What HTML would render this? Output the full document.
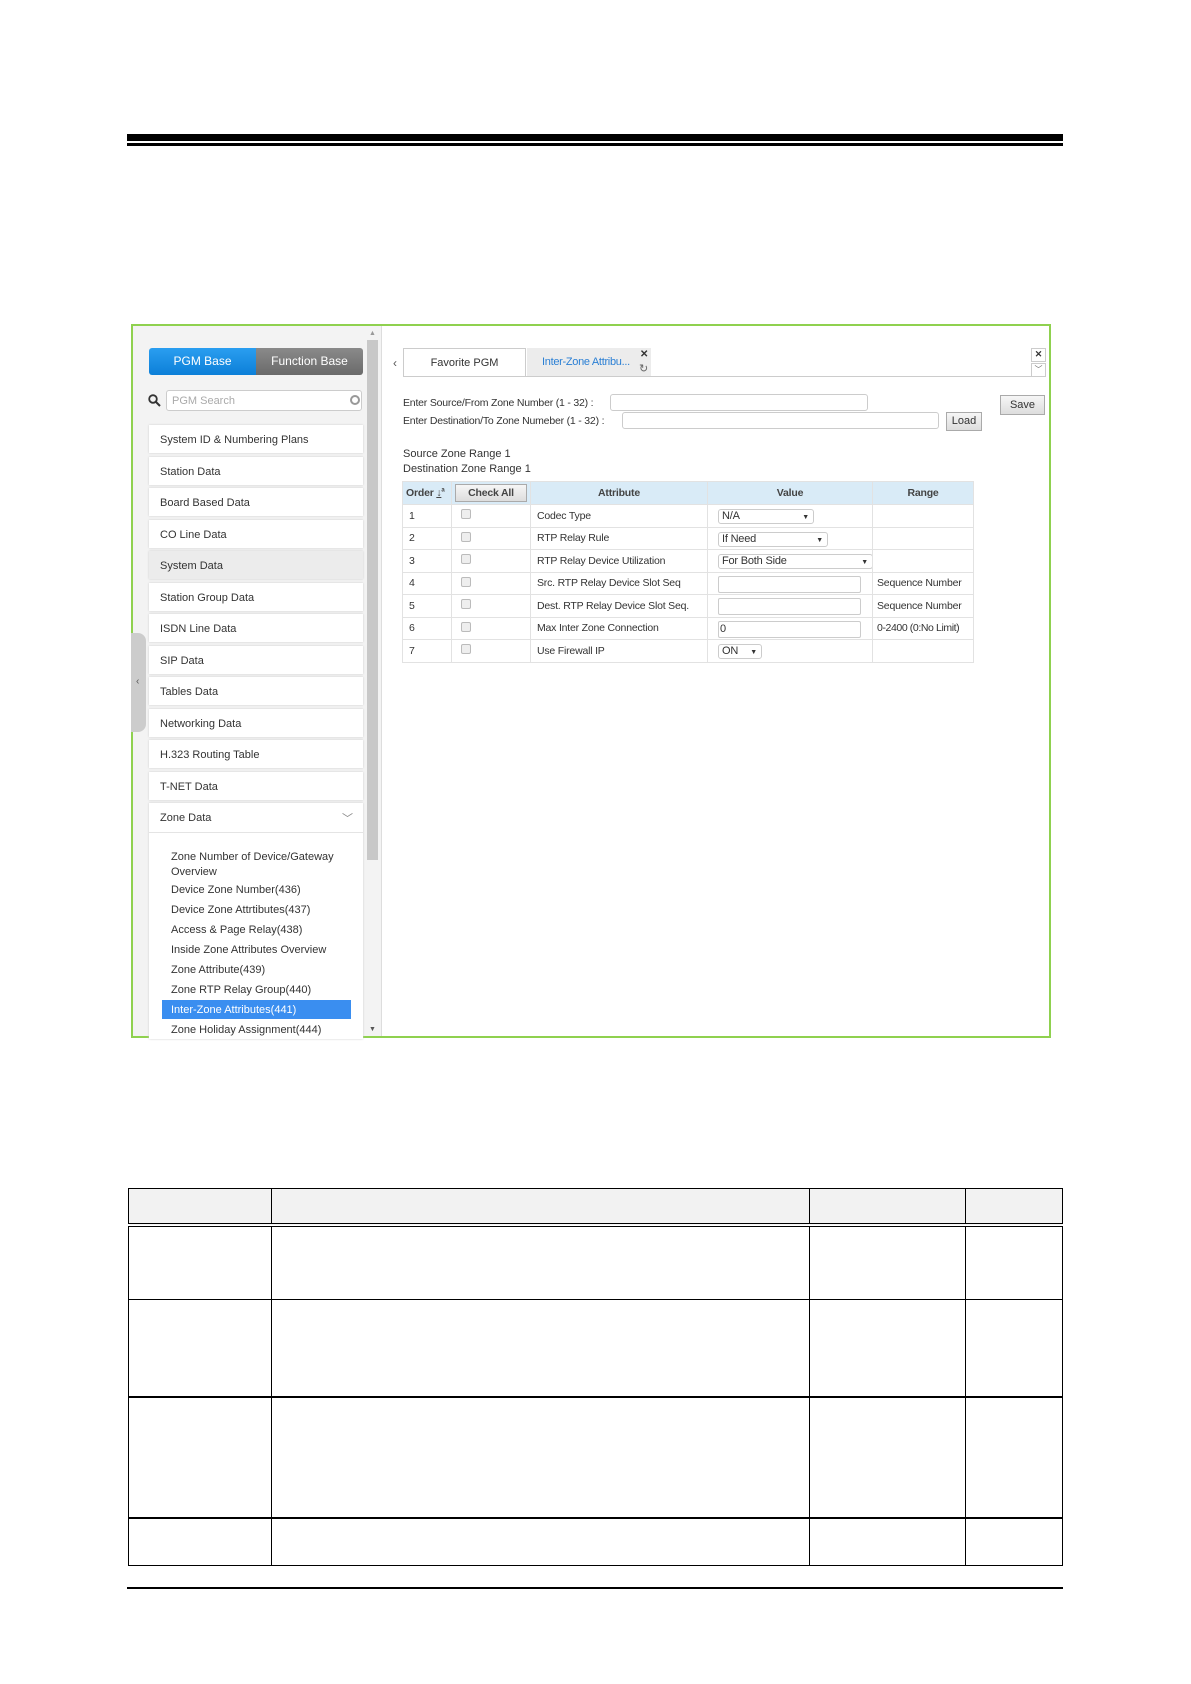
<!DOCTYPE html>
<html><head><meta charset="utf-8"><style>
*{margin:0;padding:0;box-sizing:border-box}
body{width:1191px;height:1684px;background:#fff;position:relative;font-family:"Liberation Sans",sans-serif;font-size:11px;color:#333;overflow:hidden}
.a{position:absolute}
.mi{position:absolute;left:149px;width:214px;height:28px;background:#fff;box-shadow:0 0 2px #ccc;padding:9px 0 0 11px;font-size:11px;color:#333}
.sub{position:absolute;left:171px;font-size:11px;color:#333}
.inp{position:absolute;border:1px solid #ccc;border-radius:3px;background:#fff}
.btn{position:absolute;border:1px solid #aaa;background:linear-gradient(#f6f6f6,#ddd);font-size:11px;text-align:center;color:#333}
.t td,.t th{border:1px solid #e2e2e2;font-size:10.5px;font-weight:normal;padding:0 6px;height:22.5px;text-align:left;color:#333;white-space:nowrap;overflow:hidden;letter-spacing:-0.2px}
.t th{background:#d9ebf7;text-align:center;font-weight:bold;color:#444;height:23px}
.sel{position:absolute;border:1px solid #ccc;border-radius:3px;height:15px;font-size:11px;padding-left:3px;line-height:13px;background:#fff}
.sel:after{content:"▼";position:absolute;right:4px;font-size:7px;top:1px}
.box{position:absolute;border:1px solid #ccc;border-radius:2px;background:#fff;font-size:11px;padding-left:1px;line-height:15px}
.cb{display:inline-block;width:10px;height:10px;border:1px solid #bbb;border-radius:2px;background:#eee;margin-left:3px}
.bt{border-collapse:collapse;position:absolute;left:128px;top:1188px;width:935px;table-layout:fixed}
.bt td{border:1px solid #000;padding:0}
</style></head><body>
<div class="a" style="left:127px;top:134px;width:936px;height:7px;background:#000"></div>
<div class="a" style="left:127px;top:143px;width:936px;height:3px;background:#000"></div>

<div class="a" style="left:131px;top:324px;width:920px;height:714px;border:2px solid #8fd14f;background:#fff"></div>
<div class="a" style="left:133px;top:326px;width:248px;height:710px;background:#f3f3f3"></div>
<div class="a" style="left:381px;top:326px;width:1px;height:710px;background:#ddd"></div>
<div class="a" style="left:367px;top:340px;width:11px;height:520px;background:#c8c8c8"></div>
<div class="a" style="left:369px;top:330px;font-size:7px;color:#999">▲</div>
<div class="a" style="left:369px;top:1026px;font-size:7px;color:#555">▼</div>
<div class="a" style="left:131px;top:633px;width:15px;height:99px;background:#ccc;border-radius:0 8px 8px 0"></div>
<div class="a" style="left:136px;top:676px;font-size:10px;color:#555">‹</div>

<div class="a" style="left:149px;top:348px;width:107px;height:27px;background:linear-gradient(#2a9ef0,#0c7fd8);border-radius:3px 0 0 3px;color:#fff;font-size:12px;text-align:center;line-height:27px">PGM Base</div>
<div class="a" style="left:256px;top:348px;width:107px;height:27px;background:linear-gradient(#8a8a8a,#6a6a6a);border-radius:0 3px 3px 0;color:#fff;font-size:12px;text-align:center;line-height:27px">Function Base</div>
<svg class="a" style="left:148px;top:394px" width="13" height="13" viewBox="0 0 13 13"><circle cx="5" cy="5" r="3.8" fill="none" stroke="#333" stroke-width="1.8"/><path d="M8 8l4 4" stroke="#333" stroke-width="2"/></svg>
<div class="inp" style="left:166px;top:390px;width:196px;height:21px;padding:4px 5px;color:#aaa;font-size:11px">PGM Search</div>
<div class="a" style="left:350px;top:395px;width:10px;height:10px;border:2px solid #999;border-radius:50%"></div>

<div class="mi" style="top:425px">System ID &amp; Numbering Plans</div>
<div class="mi" style="top:457px">Station Data</div>
<div class="mi" style="top:488px">Board Based Data</div>
<div class="mi" style="top:520px">CO Line Data</div>
<div class="mi" style="top:551px;background:#ececec">System Data</div>
<div class="mi" style="top:583px">Station Group Data</div>
<div class="mi" style="top:614px">ISDN Line Data</div>
<div class="mi" style="top:646px">SIP Data</div>
<div class="mi" style="top:677px">Tables Data</div>
<div class="mi" style="top:709px">Networking Data</div>
<div class="mi" style="top:740px">H.323 Routing Table</div>
<div class="mi" style="top:772px">T-NET Data</div>
<div class="mi" style="top:803px;height:236px">Zone Data<span style="position:absolute;right:10px;top:7px;color:#888">﹀</span><div style="position:absolute;left:0;right:0;top:29px;border-top:1px solid #e4e4e4"></div></div>
<div class="sub" style="top:850px;line-height:15px">Zone Number of Device/Gateway<br>Overview</div>
<div class="sub" style="top:884px">Device Zone Number(436)</div>
<div class="sub" style="top:904px">Device Zone Attrtibutes(437)</div>
<div class="sub" style="top:924px">Access &amp; Page Relay(438)</div>
<div class="sub" style="top:944px">Inside Zone Attributes Overview</div>
<div class="sub" style="top:964px">Zone Attribute(439)</div>
<div class="sub" style="top:984px">Zone RTP Relay Group(440)</div>
<div class="a" style="left:162px;top:1000px;width:189px;height:19px;background:#3a8ef0"></div>
<div class="sub" style="top:1004px;color:#fff">Inter-Zone Attributes(441)</div>
<div class="sub" style="top:1024px">Zone Holiday Assignment(444)</div>

<div class="a" style="left:393px;top:356px;font-size:12px;color:#555">‹</div>
<div class="a" style="left:403px;top:348px;width:123px;height:28px;border:1px solid #ccc;border-bottom:none;background:#fff;text-align:center;line-height:28px;font-size:11px">Favorite PGM</div>
<div class="a" style="left:527px;top:348px;width:124px;height:28px;background:#ececec;color:#2a7fd4;line-height:28px;padding-left:15px;font-size:11px;letter-spacing:-0.3px">Inter-Zone Attribu...</div>
<div class="a" style="left:640px;top:349px;font-size:10px;font-weight:bold">✕</div>
<div class="a" style="left:639px;top:362px;font-size:11px;color:#666">↻</div>
<div class="a" style="left:403px;top:376px;width:642px;height:1px;background:#ccc"></div>
<div class="a" style="left:1031px;top:348px;width:15px;height:14px;border:1px solid #ccc;font-size:9px;text-align:center;font-weight:bold">✕</div>
<div class="a" style="left:1031px;top:363px;width:15px;height:14px;border:1px solid #ccc;font-size:8px;text-align:center;color:#666">﹀</div>

<div class="a" style="left:403px;top:397px;font-size:10.5px;letter-spacing:-0.2px">Enter Source/From Zone Number (1 - 32) :</div>
<div class="a" style="left:403px;top:415px;font-size:10.5px;letter-spacing:-0.2px">Enter Destination/To Zone Numeber (1 - 32) :</div>
<div class="inp" style="left:610px;top:394px;width:258px;height:17px"></div>
<div class="inp" style="left:622px;top:412px;width:317px;height:17px"></div>
<div class="btn" style="left:946px;top:412px;width:36px;height:19px;line-height:17px">Load</div>
<div class="btn" style="left:1000px;top:395px;width:45px;height:20px;line-height:18px">Save</div>
<div class="a" style="left:403px;top:448px">Source Zone Range 1</div>
<div class="a" style="left:403px;top:463px">Destination Zone Range 1</div>

<table class="a t" style="left:402px;top:481px;width:572px;border-collapse:collapse;table-layout:fixed">
<colgroup><col style="width:49px"><col style="width:79px"><col style="width:177px"><col style="width:165px"><col></colgroup>
<tr><th style="text-align:left;padding-left:3px">Order <u>↓</u><sup style="font-size:6px">a</sup></th><th style="padding:2px 3px"><div style="border:1px solid #aaa;background:linear-gradient(#f6f6f6,#ddd);height:18px;line-height:16px;font-weight:bold">Check All</div></th><th>Attribute</th><th>Value</th><th>Range</th></tr>
<tr><td>1</td><td><span class="cb"></span></td><td>Codec Type</td><td style="position:relative"><div class="sel" style="left:10px;top:4px;width:96px">N/A</div></td><td></td></tr>
<tr><td>2</td><td><span class="cb"></span></td><td>RTP Relay Rule</td><td style="position:relative"><div class="sel" style="left:10px;top:4px;width:110px">If Need</div></td><td></td></tr>
<tr><td>3</td><td><span class="cb"></span></td><td>RTP Relay Device Utilization</td><td style="position:relative"><div class="sel" style="left:10px;top:4px;width:155px">For Both Side</div></td><td></td></tr>
<tr><td>4</td><td><span class="cb"></span></td><td>Src. RTP Relay Device Slot Seq</td><td style="position:relative"><div class="box" style="left:10px;top:3px;width:143px;height:17px"></div></td><td style="padding:0 4px">Sequence Number</td></tr>
<tr><td>5</td><td><span class="cb"></span></td><td>Dest. RTP Relay Device Slot Seq.</td><td style="position:relative"><div class="box" style="left:10px;top:3px;width:143px;height:17px"></div></td><td style="padding:0 4px">Sequence Number</td></tr>
<tr><td>6</td><td><span class="cb"></span></td><td>Max Inter Zone Connection</td><td style="position:relative"><div class="box" style="left:10px;top:3px;width:143px;height:17px">0</div></td><td style="padding:0 4px;letter-spacing:-0.4px">0-2400 (0:No Limit)</td></tr>
<tr><td>7</td><td><span class="cb"></span></td><td>Use Firewall IP</td><td style="position:relative"><div class="sel" style="left:10px;top:4px;width:44px">ON</div></td><td></td></tr>
</table>

<table class="bt">
<colgroup><col style="width:143px"><col style="width:538px"><col style="width:156px"><col></colgroup>
<tr style="height:36px;background:#f2f2f2"><td></td><td></td><td></td><td></td></tr>
<tr style="height:75px;border-top:4px double #000"><td></td><td></td><td></td><td></td></tr>
<tr style="height:97px"><td></td><td></td><td></td><td></td></tr>
<tr style="height:121px;border-top:2px solid #000"><td></td><td></td><td></td><td></td></tr>
<tr style="height:48px;border-top:2px solid #000"><td></td><td></td><td></td><td></td></tr>
</table>
<div class="a" style="left:127px;top:1587px;width:936px;height:2px;background:#000"></div>
</body></html>
